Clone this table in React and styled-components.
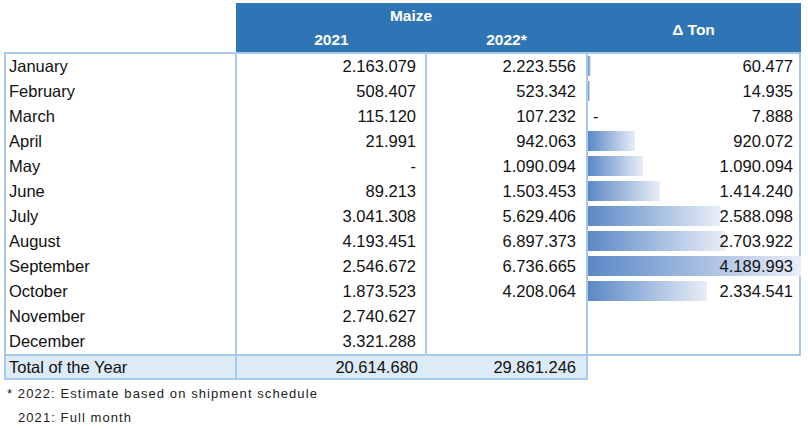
import React from 'react';
import styled, { createGlobalStyle } from 'styled-components';

const rows = [
  { month: 'January', y21: '2.163.079', y22: '2.223.556', delta: 60477 },
  { month: 'February', y21: '508.407', y22: '523.342', delta: 14935 },
  { month: 'March', y21: '115.120', y22: '107.232', delta: -7888 },
  { month: 'April', y21: '21.991', y22: '942.063', delta: 920072 },
  { month: 'May', y21: '-', y22: '1.090.094', delta: 1090094 },
  { month: 'June', y21: '89.213', y22: '1.503.453', delta: 1414240 },
  { month: 'July', y21: '3.041.308', y22: '5.629.406', delta: 2588098 },
  { month: 'August', y21: '4.193.451', y22: '6.897.373', delta: 2703922 },
  { month: 'September', y21: '2.546.672', y22: '6.736.665', delta: 4189993 },
  { month: 'October', y21: '1.873.523', y22: '4.208.064', delta: 2334541 },
  { month: 'November', y21: '2.740.627', y22: '', delta: null },
  { month: 'December', y21: '3.321.288', y22: '', delta: null },
];

const MAX = 4189993;
const BAR_SPACE = 213;

const fmt = (n) => Math.abs(n).toString().replace(/\B(?=(\d{3})+(?!\d))/g, '.');

const GlobalStyle = createGlobalStyle`
  body {
    margin: 0;
    background: #fff;
    font-family: "Liberation Sans", Arial, sans-serif;
    color: #111;
  }
`;

const Page = styled.div`
  padding: 3px 0 0 4px;
  width: 808px;
  height: 429px;
  box-sizing: border-box;
  overflow: hidden;
`;

const HeadRow = styled.div`
  display: flex;
  margin-left: 232px;
`;

const HeadBlock = styled.div`
  width: 565px;
  height: 49px;
  background: #2e75b6;
  color: #fff;
  font-weight: bold;
  font-size: 15.5px;
  display: grid;
  grid-template-columns: 191px 159px 215px;
  grid-template-rows: 24px 25px;
`;

const HeadCell = styled.div`
  display: flex;
  align-items: center;
  justify-content: center;
  grid-column: ${(p) => p.$col || 'auto'};
  grid-row: ${(p) => p.$row || 'auto'};
  padding-top: ${(p) => p.$pt || 0}px;
`;

const Body = styled.div`
  display: flex;
  align-items: flex-start;
`;

const LeftBlock = styled.div`
  border: 2px solid #a9c9ea;
  width: 580px;
`;

const Row = styled.div`
  display: grid;
  grid-template-columns: 231px 190px 158px;
  font-size: 16.5px;
  background: ${(p) => (p.$total ? '#ddebf7' : 'transparent')};
  border-top: ${(p) => (p.$total ? '2px solid #a9c9ea' : 'none')};
  height: ${(p) => (p.$total ? 22 : 25)}px;
`;

const Cell = styled.div`
  display: flex;
  align-items: center;
  justify-content: ${(p) => (p.$num ? 'flex-end' : 'flex-start')};
  padding: ${(p) => (p.$num ? '0 9px 0 0' : '0 0 0 3px')};
  border-right: ${(p) => (p.$line ? '2px solid #a9c9ea' : 'none')};
  white-space: nowrap;
`;

const DeltaBlock = styled.div`
  border: 2px solid #a9c9ea;
  border-left: none;
  width: 211px;
`;

const DeltaRow = styled.div`
  position: relative;
  height: 25px;
  display: flex;
  align-items: center;
  justify-content: space-between;
  padding: 0 6px 0 5px;
  font-size: 16.5px;
`;

const Bar = styled.div`
  position: absolute;
  left: 0;
  top: 2px;
  height: 20px;
  background: linear-gradient(to right, #5b88c6, #e8eef7);
`;

const Value = styled.span`
  position: relative;
  margin-left: auto;
`;

const Sign = styled.span`
  position: relative;
`;

const Notes = styled.div`
  font-size: 13px;
  letter-spacing: 1.08px;
  color: #222;
  padding: 2px 0 0 3px;
  line-height: 24px;
`;

const NoteLine = styled.div`
  padding-left: ${(p) => p.$indent || 0}px;
`;

export default function App() {
  return (
    <>
      <GlobalStyle />
      <Page>
        <HeadRow>
          <HeadBlock>
            <HeadCell $col="1 / 3" $row="1" $pt={2}>Maize</HeadCell>
            <HeadCell $col="1" $row="2">2021</HeadCell>
            <HeadCell $col="2" $row="2">2022*</HeadCell>
            <HeadCell $col="3" $row="1 / 3" $pt={4}>Δ Ton</HeadCell>
          </HeadBlock>
        </HeadRow>
        <Body>
          <LeftBlock>
            {rows.map((r) => (
              <Row key={r.month}>
                <Cell $line>{r.month}</Cell>
                <Cell $num $line>{r.y21}</Cell>
                <Cell $num>{r.y22}</Cell>
              </Row>
            ))}
            <Row $total>
              <Cell $line>Total of the Year</Cell>
              <Cell $num>20.614.680</Cell>
              <Cell $num>29.861.246</Cell>
            </Row>
          </LeftBlock>
          <DeltaBlock>
            {rows.map((r) => (
              <DeltaRow key={r.month}>
                {r.delta !== null && r.delta > 0 && (
                  <Bar style={{ width: Math.max(2, (r.delta / MAX) * BAR_SPACE) + 'px' }} />
                )}
                {r.delta !== null && r.delta < 0 && <Sign>-</Sign>}
                {r.delta !== null && <Value>{fmt(r.delta)}</Value>}
              </DeltaRow>
            ))}
          </DeltaBlock>
        </Body>
        <Notes>
          <NoteLine>* 2022: Estimate based on shipment schedule</NoteLine>
          <NoteLine $indent={11}>2021: Full month</NoteLine>
        </Notes>
      </Page>
    </>
  );
}
